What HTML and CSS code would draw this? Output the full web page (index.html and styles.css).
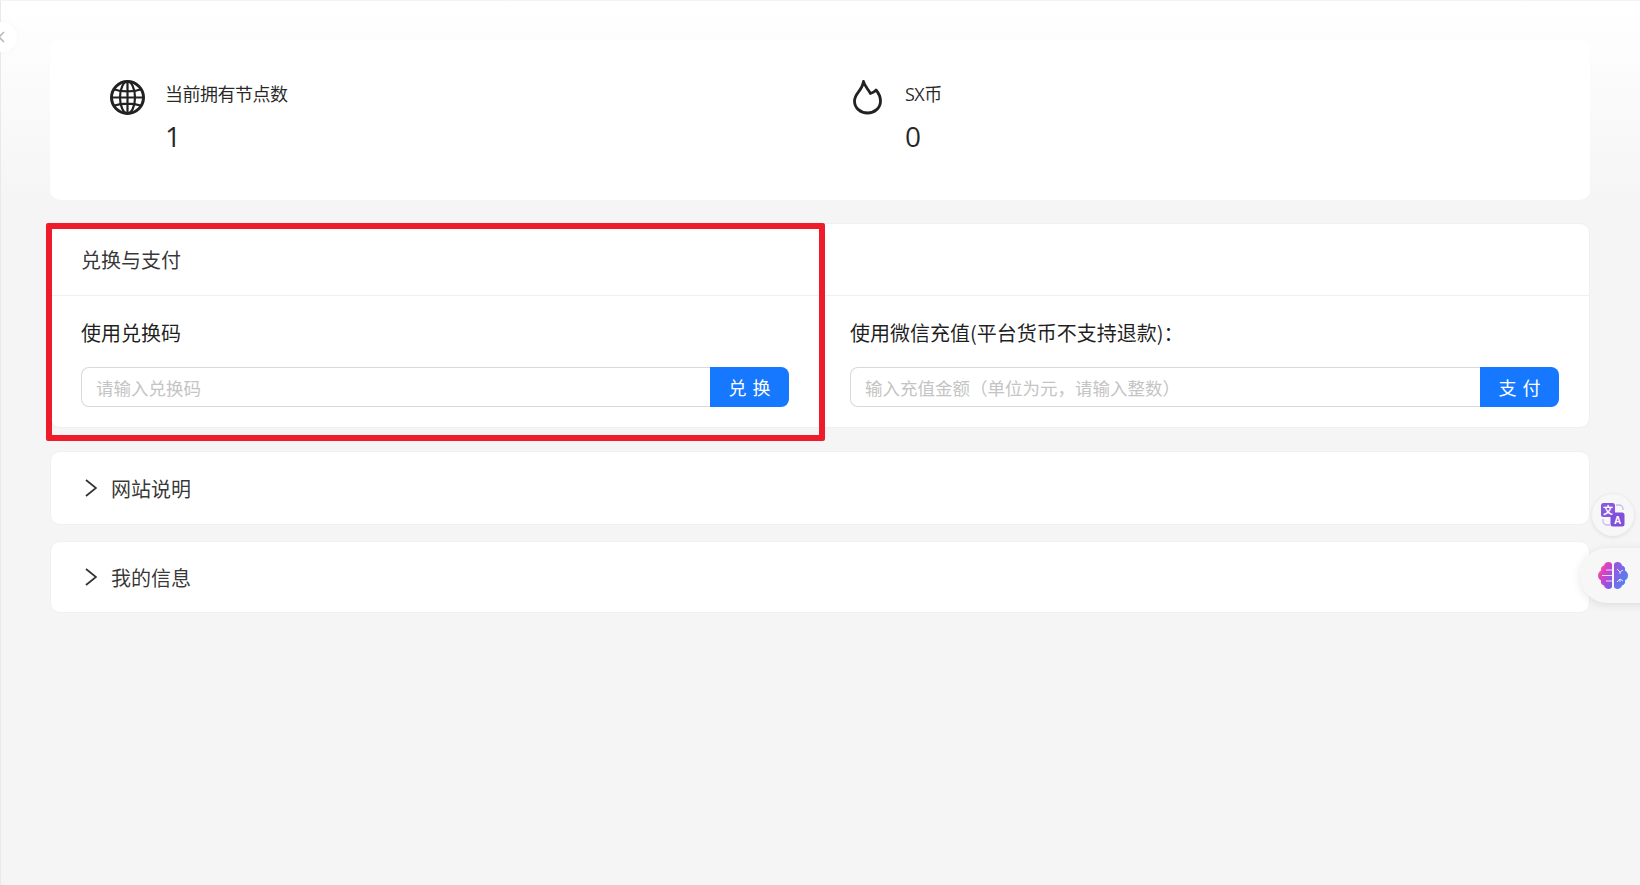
FILE: index.html
```html
<!DOCTYPE html>
<html lang="zh-CN">
<head>
<meta charset="utf-8">
<title>兑换与支付</title>
<link rel="stylesheet" href="styles.css">
</head>
<body>
<main class="page">
  <section class="stats-card">
    <div class="stat">
      <svg class="stat-icon globe" viewBox="0 0 35 35" fill="none" stroke="#222" stroke-width="2.200">
        <circle cx="17.500" cy="17.500" r="16" stroke-width="3"/>
        <ellipse cx="17.500" cy="17.500" rx="7.500" ry="16"/>
        <path d="M17.500 2v31M2 17.500h31M4.500 9.500c7 2.600 19 2.600 26 0M4.500 25.500c7-2.600 19-2.600 26 0"/>
      </svg>
      <div class="stat-text">
        <div class="stat-label">当前拥有节点数</div>
        <div class="stat-value">1</div>
      </div>
    </div>
    <div class="stat">
      <svg class="stat-icon flame" viewBox="0 0 29 35" fill="none" stroke="#222" stroke-width="2.800" stroke-linejoin="round" stroke-linecap="round">
        <path d="M10.500 1.500C11.500 6 15 9 17.500 13.500 19.500 13 21.500 12 23 10 26 13.500 27.500 17.500 27.500 21 27.500 28 21.500 33 14.500 33 7.500 33 1.500 28 1.500 21 1.500 13 9.500 10.500 10.500 1.500Z"/>
      </svg>
      <div class="stat-text">
        <div class="stat-label">SX币</div>
        <div class="stat-value">0</div>
      </div>
    </div>
  </section>

  <section class="pay-card">
    <header class="pay-head">兑换与支付</header>
    <div class="pay-body">
      <div class="pay-col">
        <div class="pay-label">使用兑换码</div>
        <div class="input-group">
          <input class="text-input" type="text" placeholder="请输入兑换码">
          <button class="action-btn" type="button">兑换</button>
        </div>
      </div>
      <div class="pay-col">
        <div class="pay-label">使用微信充值(平台货币不支持退款)：</div>
        <div class="input-group">
          <input class="text-input" type="text" placeholder="输入充值金额（单位为元，请输入整数）">
          <button class="action-btn" type="button">支付</button>
        </div>
      </div>
    </div>
  </section>

  <section class="collapse first">
    <svg class="chevron" viewBox="0 0 12 18" fill="none" stroke="#333" stroke-width="1.800"><path d="M1 1l10 8-10 8"/></svg>
    <span>网站说明</span>
  </section>
  <section class="collapse second">
    <svg class="chevron" viewBox="0 0 12 18" fill="none" stroke="#333" stroke-width="1.800"><path d="M1 1l10 8-10 8"/></svg>
    <span>我的信息</span>
  </section>
</main>

<div class="back-btn">
  <svg viewBox="0 0 7 12" fill="none" stroke="#bbb" stroke-width="1.600"><path d="M6 1L1 6l5 5"/></svg>
</div>

<div class="highlight"></div>

<div class="float-translate">
  <svg viewBox="0 0 24 24" width="24" height="24">
    <path d="M15 2h3a4 4 0 0 1 4 4v1M2 16v2a4 4 0 0 0 4 4h3" fill="none" stroke="#cbb8f5" stroke-width="1.400"/>
    <rect x="0" y="0" width="14" height="14" rx="2.500" fill="#8a55e0"/>
    <rect x="9.500" y="9.500" width="14" height="14" rx="2.500" fill="#7f4fdc"/>
    <text class="tr-zh" x="7" y="10.800">文</text>
    <text class="tr-en" x="16.500" y="21">A</text>
  </svg>
</div>

<div class="float-brain">
  <svg viewBox="0 0 30 27" width="30" height="27">
    <defs>
      <linearGradient id="brainL" x1="0" y1="0" x2="1" y2="1">
        <stop offset="0" stop-color="#f59a3c"/>
        <stop offset=".35" stop-color="#e23fc0"/>
        <stop offset="1" stop-color="#6a5ff0"/>
      </linearGradient>
      <linearGradient id="brainR" x1="0" y1="0" x2="1" y2="1">
        <stop offset="0" stop-color="#a24fdc"/>
        <stop offset="1" stop-color="#3d8ff5"/>
      </linearGradient>
    </defs>
    <path d="M14 2.500C14 1 12.500 0 10.500 0 8 0 6.500 1.500 6 3.500 3.500 4 2.500 6 3 8.500 1 9.500 0 11.500 0 13.500s1 4 3 5c-.5 2.500.5 4.500 3 5 .5 2 2.500 3.500 4.500 3.500 2 0 3.500-1 3.500-2.500Z" fill="url(#brainL)"/>
    <path d="M16 2.500C16 1 17.500 0 19.500 0 22 0 23.500 1.500 24 3.500c2.500.5 3.500 2.500 3 5 2 1 3 3 3 5s-1 4-3 5c.5 2.500-.5 4.500-3 5-.5 2-2.500 3.500-4.500 3.500-2 0-3.500-1-3.500-2.500Z" fill="url(#brainR)"/>
    <path d="M4 13.500h10M8 8h6M8 19h6M19 7l3 3 3-2M22 10v2M19 20l3-3 3 2M22 17v3" fill="none" stroke="#fff" stroke-width="1" opacity=".8"/>
  </svg>
</div>
</body>
</html>
```

FILE: styles.css
```css
* { box-sizing: border-box; }

html, body {
  margin: 0;
  height: 100%;
}

body {
  font-family: "Noto Sans CJK SC", "Liberation Sans", sans-serif;
  color: rgba(0, 0, 0, 0.88);
  background: #f5f5f5;
  overflow: hidden;
}

.page {
  position: relative;
  height: 885px;
  padding: 40px 50px 0;
  border-left: 1px solid #e9e9e9;
  border-top: 1px solid #f4f4f4;
  background: linear-gradient(#ffffff 0, #f5f5f5 200px);
}

/* Top statistics */
.stats-card {
  display: grid;
  grid-template-columns: 740px 1fr;
  height: 160px;
  margin-top: -1px;
  margin-left: -1px;
  padding: 40px 0 0 60px;
  background: #fff;
  border-radius: 10px;
}

.stat {
  display: flex;
  align-items: flex-start;
}

.stat-icon {
  width: 35px;
  height: 35px;
  flex: none;
}

.stat-icon.globe {
  margin-right: 20px;
}

.stat-icon.flame {
  width: 29px;
  margin-left: 3px;
  margin-right: 23px;
}

.stat-text {
  font-family: "Open Sans", "Noto Sans CJK SC", sans-serif;
}

.stat-label {
  font-size: 18px;
  line-height: 28px;
  letter-spacing: -0.5px;
  color: rgba(0, 0, 0, 0.85);
}

.stat-value {
  font-size: 28px;
  font-weight: 400;
  line-height: 40px;
  margin-top: 8px;
  color: rgba(0, 0, 0, 0.85);
}

/* Exchange and payment */
.pay-card {
  margin: 23px 0 0 -1px;
  height: 205px;
  background: #fff;
  border: 1px solid #f0f0f0;
  border-radius: 10px;
}

.pay-head {
  height: 72px;
  padding: 0 30px;
  display: flex;
  align-items: center;
  font-size: 20px;
  color: rgba(0, 0, 0, 0.8);
  border-bottom: 1px solid #f0f0f0;
}

.pay-body {
  display: grid;
  grid-template-columns: 708px 1fr;
  gap: 61px;
  padding: 20px 30px;
}

.pay-label {
  font-size: 20px;
  line-height: 34px;
  margin-bottom: 17px;
  white-space: nowrap;
}

.input-group {
  display: flex;
  height: 40px;
}

.text-input {
  flex: 1;
  min-width: 0;
  height: 40px;
  padding: 1px 14px 0;
  font: inherit;
  font-size: 17.500px;
  color: rgba(0, 0, 0, 0.88);
  background: #fff;
  border: 1px solid #d9d9d9;
  border-right: 0;
  border-radius: 8px 0 0 8px;
  outline: none;
}

.text-input::placeholder {
  color: #c4c4c4;
  opacity: 1;
}

.action-btn {
  width: 79px;
  height: 40px;
  padding: 0;
  font: inherit;
  font-size: 18px;
  letter-spacing: 0.34em;
  text-indent: 0.34em;
  color: #fff;
  background: #1677ff;
  border: 0;
  border-radius: 0 8px 8px 0;
}

/* Collapsed panels */
.collapse {
  display: flex;
  align-items: center;
  margin-left: -1px;
  padding-left: 34px;
  background: #fff;
  border: 1px solid #f0f0f0;
  border-radius: 10px;
  font-size: 20px;
  color: rgba(0, 0, 0, 0.8);
}

.collapse.first {
  height: 74px;
  margin-top: 23px;
}

.collapse.second {
  height: 72px;
  margin-top: 16px;
}

.chevron {
  width: 12px;
  height: 18px;
  margin-right: 14px;
  flex: none;
}

/* Overlays */
.back-btn {
  position: absolute;
  left: -13px;
  top: 22px;
  width: 30px;
  height: 30px;
  display: flex;
  align-items: center;
  justify-content: flex-end;
  padding-right: 12px;
  background: #fff;
  border-radius: 50%;
  box-shadow: 0 0 6px rgba(0, 0, 0, 0.03);
}

.back-btn svg {
  width: 7px;
  height: 12px;
}

.highlight {
  position: absolute;
  left: 46px;
  top: 223px;
  width: 779px;
  height: 218px;
  border: 6px solid #ee1c2a;
  border-radius: 2px;
  pointer-events: none;
}

.float-translate {
  position: absolute;
  left: 1592px;
  top: 494px;
  width: 42px;
  height: 42px;
  display: flex;
  align-items: center;
  justify-content: center;
  background: #f7f7f7;
  border-radius: 50%;
  box-shadow: 0 1px 4px rgba(0, 0, 0, 0.1);
}

.tr-zh {
  font-size: 10px;
  font-weight: 700;
  fill: #fff;
  text-anchor: middle;
}

.tr-en {
  font-family: "Liberation Sans", sans-serif;
  font-size: 10px;
  font-weight: 700;
  fill: #fff;
  text-anchor: middle;
}

.float-brain {
  position: absolute;
  left: 1580px;
  top: 548px;
  width: 80px;
  height: 55px;
  display: flex;
  align-items: center;
  padding-left: 18px;
  background: #f7f7f7;
  border-radius: 28px 0 0 28px;
  box-shadow: 0 2px 10px rgba(0, 0, 0, 0.1);
}
```
